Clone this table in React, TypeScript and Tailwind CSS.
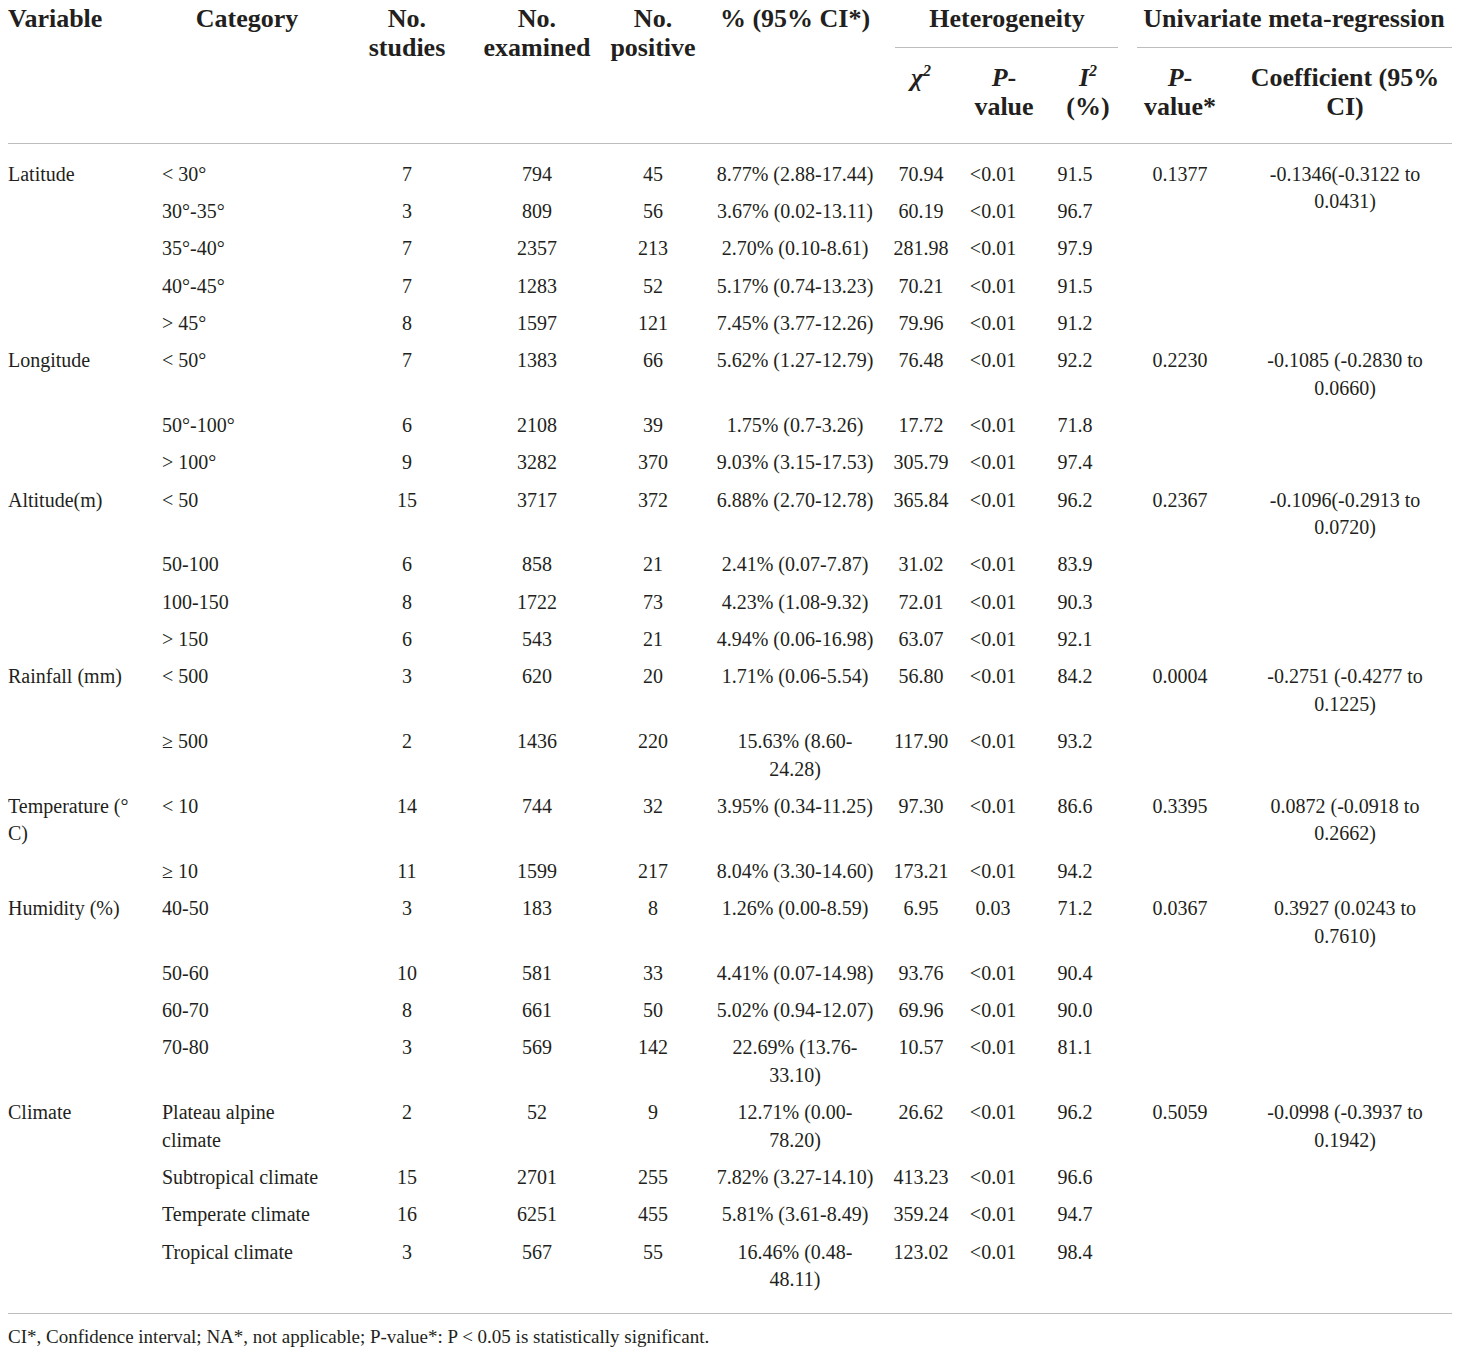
import React from "react";

type Row = {
  v: string;
  c: string;
  s: string;
  e: string;
  p: string;
  pct: string;
  chi: string;
  pv: string;
  i2: string;
  mp?: string;
  coef?: string;
  two?: boolean;
};

const rows: Row[] = [
  { v: "Latitude", c: "< 30°", s: "7", e: "794", p: "45", pct: "8.77% (2.88-17.44)", chi: "70.94", pv: "<0.01", i2: "91.5", mp: "0.1377", coef: "-0.1346(-0.3122 to\n0.0431)" },
  { v: "", c: "30°-35°", s: "3", e: "809", p: "56", pct: "3.67% (0.02-13.11)", chi: "60.19", pv: "<0.01", i2: "96.7" },
  { v: "", c: "35°-40°", s: "7", e: "2357", p: "213", pct: "2.70% (0.10-8.61)", chi: "281.98", pv: "<0.01", i2: "97.9" },
  { v: "", c: "40°-45°", s: "7", e: "1283", p: "52", pct: "5.17% (0.74-13.23)", chi: "70.21", pv: "<0.01", i2: "91.5" },
  { v: "", c: "> 45°", s: "8", e: "1597", p: "121", pct: "7.45% (3.77-12.26)", chi: "79.96", pv: "<0.01", i2: "91.2" },
  { v: "Longitude", c: "< 50°", s: "7", e: "1383", p: "66", pct: "5.62% (1.27-12.79)", chi: "76.48", pv: "<0.01", i2: "92.2", mp: "0.2230", coef: "-0.1085 (-0.2830 to\n0.0660)", two: true },
  { v: "", c: "50°-100°", s: "6", e: "2108", p: "39", pct: "1.75% (0.7-3.26)", chi: "17.72", pv: "<0.01", i2: "71.8" },
  { v: "", c: "> 100°", s: "9", e: "3282", p: "370", pct: "9.03% (3.15-17.53)", chi: "305.79", pv: "<0.01", i2: "97.4" },
  { v: "Altitude(m)", c: "< 50", s: "15", e: "3717", p: "372", pct: "6.88% (2.70-12.78)", chi: "365.84", pv: "<0.01", i2: "96.2", mp: "0.2367", coef: "-0.1096(-0.2913 to\n0.0720)", two: true },
  { v: "", c: "50-100", s: "6", e: "858", p: "21", pct: "2.41% (0.07-7.87)", chi: "31.02", pv: "<0.01", i2: "83.9" },
  { v: "", c: "100-150", s: "8", e: "1722", p: "73", pct: "4.23% (1.08-9.32)", chi: "72.01", pv: "<0.01", i2: "90.3" },
  { v: "", c: "> 150", s: "6", e: "543", p: "21", pct: "4.94% (0.06-16.98)", chi: "63.07", pv: "<0.01", i2: "92.1" },
  { v: "Rainfall (mm)", c: "< 500", s: "3", e: "620", p: "20", pct: "1.71% (0.06-5.54)", chi: "56.80", pv: "<0.01", i2: "84.2", mp: "0.0004", coef: "-0.2751 (-0.4277 to\n0.1225)", two: true },
  { v: "", c: "≥ 500", s: "2", e: "1436", p: "220", pct: "15.63% (8.60-\n24.28)", chi: "117.90", pv: "<0.01", i2: "93.2", two: true },
  { v: "Temperature (°\nC)", c: "< 10", s: "14", e: "744", p: "32", pct: "3.95% (0.34-11.25)", chi: "97.30", pv: "<0.01", i2: "86.6", mp: "0.3395", coef: "0.0872 (-0.0918 to\n0.2662)", two: true },
  { v: "", c: "≥ 10", s: "11", e: "1599", p: "217", pct: "8.04% (3.30-14.60)", chi: "173.21", pv: "<0.01", i2: "94.2" },
  { v: "Humidity (%)", c: "40-50", s: "3", e: "183", p: "8", pct: "1.26% (0.00-8.59)", chi: "6.95", pv: "0.03", i2: "71.2", mp: "0.0367", coef: "0.3927 (0.0243 to\n0.7610)", two: true },
  { v: "", c: "50-60", s: "10", e: "581", p: "33", pct: "4.41% (0.07-14.98)", chi: "93.76", pv: "<0.01", i2: "90.4" },
  { v: "", c: "60-70", s: "8", e: "661", p: "50", pct: "5.02% (0.94-12.07)", chi: "69.96", pv: "<0.01", i2: "90.0" },
  { v: "", c: "70-80", s: "3", e: "569", p: "142", pct: "22.69% (13.76-\n33.10)", chi: "10.57", pv: "<0.01", i2: "81.1", two: true },
  { v: "Climate", c: "Plateau alpine\nclimate", s: "2", e: "52", p: "9", pct: "12.71% (0.00-\n78.20)", chi: "26.62", pv: "<0.01", i2: "96.2", mp: "0.5059", coef: "-0.0998 (-0.3937 to\n0.1942)", two: true },
  { v: "", c: "Subtropical climate", s: "15", e: "2701", p: "255", pct: "7.82% (3.27-14.10)", chi: "413.23", pv: "<0.01", i2: "96.6" },
  { v: "", c: "Temperate climate", s: "16", e: "6251", p: "455", pct: "5.81% (3.61-8.49)", chi: "359.24", pv: "<0.01", i2: "94.7" },
  { v: "", c: "Tropical climate", s: "3", e: "567", p: "55", pct: "16.46% (0.48-\n48.11)", chi: "123.02", pv: "<0.01", i2: "98.4", two: true },
];

const GRID =
  "grid grid-cols-[155px_200px_104px_156px_76px_208px_44px_100px_64px_146px_184px_23px]";

function C({ children, cls = "" }: { children?: React.ReactNode; cls?: string }) {
  return (
    <div className={"flex justify-center " + cls}>
      <div className="whitespace-pre text-center">{children}</div>
    </div>
  );
}

function DataRow({ r }: { r: Row }) {
  return (
    <div className={GRID + " " + (r.two ? "h-[64.8px]" : "h-[37.3px]") + " pt-[4.9px]"}>
      <div className="whitespace-pre pl-2">{r.v}</div>
      <div className="whitespace-pre pl-[7px]">{r.c}</div>
      <C>{r.s}</C>
      <C>{r.e}</C>
      <C>{r.p}</C>
      <C>{r.pct}</C>
      <C>{r.chi}</C>
      <C>{r.pv}</C>
      <C>{r.i2}</C>
      <C>{r.mp ?? ""}</C>
      <C>{r.coef ?? ""}</C>
      <div />
    </div>
  );
}

export default function App() {
  return (
    <div
      className="w-[1460px] h-[1356px] bg-white text-[#231f20] overflow-hidden"
      style={{ fontFamily: '"Liberation Serif", "Times New Roman", serif' }}
    >
      {/* Header */}
      <div className={GRID + " pt-[4px] text-[26px] leading-[29px] font-bold"}>
        <div className="row-span-2 pl-2 whitespace-pre">Variable</div>
        <C cls="row-span-2 pr-4">Category</C>
        <C cls="row-span-2">{"No.\nstudies"}</C>
        <C cls="row-span-2">{"No.\nexamined"}</C>
        <C cls="row-span-2">{"No.\npositive"}</C>
        <C cls="row-span-2">% (95% CI*)</C>
        <div className="col-span-3 h-[58.5px]">
          <div className="text-center pl-2 whitespace-pre">Heterogeneity</div>
          <div className="mt-[14px] ml-[-4px] mr-[-11px] h-px bg-[#bdbdbd]" />
        </div>
        <div className="col-span-3 h-[58.5px]">
          <div className="text-center pl-[21px] whitespace-pre">Univariate meta-regression</div>
          <div className="mt-[14px] ml-[30px] mr-[8px] h-px bg-[#bdbdbd]" />
        </div>
        <C cls="col-start-7">
          <i>χ</i>
          <sup className="text-[16px] italic relative top-[-10px]">2</sup>
        </C>
        <C cls="pl-[22px]">
          <i>P</i>-{"\n"}value
        </C>
        <C cls="pl-[26px]">
          <i>I</i>
          <sup className="text-[16px] italic relative top-[-10px]">2</sup>
          {"\n"}(%)
        </C>
        <C>
          <i>P</i>-{"\n"}value*
        </C>
        <C>{"Coefficient (95%\nCI)"}</C>
        <div />
      </div>
      <div className="mt-[22px] mx-2 h-px bg-[#bdbdbd]" />

      {/* Body */}
      <div className="mt-[12.4px] text-[20px] leading-[27.5px]">
        {rows.map((r, i) => (
          <DataRow key={i} r={r} />
        ))}
      </div>

      <div className="mt-[14.5px] mx-2 h-px bg-[#bdbdbd]" />
      <div className="mt-[11px] pl-2 text-[19px] leading-[24px] whitespace-pre">
        CI*, Confidence interval; NA*, not applicable; P-value*: P &lt; 0.05 is statistically significant.
      </div>
    </div>
  );
}
